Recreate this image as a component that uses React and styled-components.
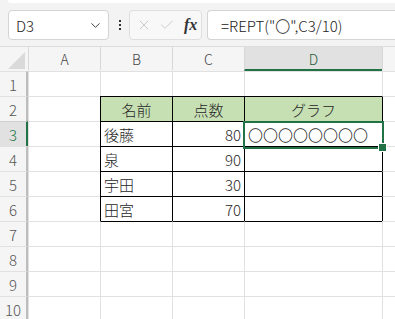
import React from 'react'
import styled, { createGlobalStyle } from 'styled-components'
import { ChevronDown, X, Check } from 'lucide-react'

const GlobalStyle = createGlobalStyle`
  html, body {
    margin: 0;
    padding: 0;
    overflow: hidden;
    background: #f3f3f3;
  }
  * {
    box-sizing: border-box;
  }
`

const FONT = `"Noto Sans CJK JP", "Noto Sans", sans-serif`
const GRID = '#e1e1e1'
const GREEN = '#217346'

const Window = styled.div`
  width: 395px;
  height: 319px;
  overflow: hidden;
  background: #f3f3f3;
  font-family: ${FONT};
  font-weight: 300;
`

const Toolbar = styled.div`
  height: 47px;
  background: #f3f3f3;
  border-bottom: 1px solid #dcdcdc;
`

const RibbonLip = styled.div`
  height: 3px;
  margin-left: 8px;
  background: #fff;
  border-bottom-left-radius: 6px;
`

const FormulaRow = styled.div`
  display: flex;
  align-items: center;
  height: 30px;
  margin-top: 7px;
  padding-left: 8px;
`

const NameBox = styled.div`
  display: flex;
  align-items: center;
  justify-content: space-between;
  width: 101px;
  height: 30px;
  padding: 0 5px 0 7px;
  background: #fff;
  border: 1px solid #d4d4d4;
  border-radius: 4px;
  font-size: 15px;
  color: #222;
`

const Dots = styled.div`
  display: flex;
  flex-direction: column;
  gap: 2px;
  margin: 0 8px 0 10px;

  span {
    width: 2px;
    height: 2px;
    background: #333;
  }
`

const ButtonBox = styled.div`
  display: flex;
  align-items: center;
  gap: 7px;
  width: 73px;
  height: 30px;
  padding-left: 6px;
  background: #f8f8f8;
  border: 1px solid #dedede;
  border-radius: 4px;
  color: #c4c4c4;
`

const Fx = styled.span`
  font-family: "Liberation Serif", serif;
  font-style: italic;
  font-weight: bold;
  font-size: 16px;
  color: #333;
  margin-left: 2px;
`

const FormulaInput = styled.div`
  display: flex;
  align-items: center;
  flex: 1;
  height: 30px;
  margin-left: 5px;
  padding-left: 13px;
  background: #fff;
  border: 1px solid #d4d4d4;
  border-right: none;
  border-radius: 4px 0 0 4px;
  font-size: 15px;
  color: #222;
  white-space: nowrap;
`

const Sheet = styled.div`
  position: relative;
  display: grid;
  grid-template-columns: 28px 72px 72px 72px 138px 1fr;
  grid-template-rows: 24px;
  grid-auto-rows: 25px;
  background: #fff;
`

const Corner = styled.div`
  position: relative;
  background: #f5f5f5;

  &::after {
    content: '';
    position: absolute;
    right: 3px;
    bottom: 2px;
    border-style: solid;
    border-width: 0 0 17px 17px;
    border-color: transparent transparent #dadada transparent;
  }
`

const ColHead = styled.div`
  display: flex;
  align-items: center;
  justify-content: center;
  background: ${p => (p.$active ? '#e1e1e1' : '#f5f5f5')};
  border-left: 1px solid #d8d8d8;
  border-bottom: 2px solid ${p => (p.$active ? GREEN : '#f5f5f5')};
  font-size: 14px;
  color: ${p => (p.$active ? '#1c5c38' : '#444')};
  padding-top: 2px;
`

const RowHead = styled.div`
  display: flex;
  align-items: center;
  justify-content: center;
  background: ${p => (p.$active ? '#e1e1e1' : '#f5f5f5')};
  border-top: 1px solid ${p => (p.$active ? '#d0d0d0' : GRID)};
  border-right: 2px solid ${p => (p.$active ? GREEN : '#bdbdbd')};
  font-size: 15px;
  color: ${p => (p.$active ? GREEN : '#555')};
`

const Cell = styled.div`
  display: flex;
  align-items: center;
  justify-content: ${p => p.$align};
  padding: 0 3px 0 3px;
  background: ${p => p.$fill};
  border-left: 1px solid ${p => p.$left};
  border-top: 1px solid ${p => p.$top};
  font-size: 15px;
  color: #262626;
  white-space: nowrap;
  overflow: hidden;
`

const Selection = styled.div`
  position: absolute;
  left: 243px;
  top: 74px;
  width: 141px;
  height: 28px;
  border: 2px solid ${GREEN};
  pointer-events: none;

  &::after {
    content: '';
    position: absolute;
    right: -5px;
    bottom: -5px;
    width: 7px;
    height: 7px;
    background: ${GREEN};
    border: 1px solid #fff;
  }
`

const cols = ['A', 'B', 'C', 'D', '']

const data = [
  ['名前', '点数', 'グラフ'],
  ['後藤', '80', '〇〇〇〇〇〇〇〇'],
  ['泉', '90', ''],
  ['宇田', '30', ''],
  ['田宮', '70', ''],
]

const inTable = (r, c) => r >= 2 && r <= 6 && c >= 1 && c <= 3

const cellProps = (r, c) => {
  const tableCell = inTable(r, c)
  const left = tableCell || inTable(r, c - 1) ? '#000' : GRID
  const top = tableCell || inTable(r - 1, c) ? '#000' : GRID
  let text = ''
  let align = 'flex-start'
  let fill = '#fff'
  if (tableCell) {
    text = data[r - 2][c - 1]
    if (r === 2) {
      align = 'center'
      fill = '#c6e0b4'
    } else if (c === 2) {
      align = 'flex-end'
    }
  }
  return { left, top, text, align, fill }
}

const App = () => {
  const rows = Array.from({ length: 10 }, (_, i) => i + 1)

  return (
    <Window>
      <GlobalStyle />
      <Toolbar>
        <RibbonLip />
        <FormulaRow>
          <NameBox>
            D3
            <ChevronDown size={15} strokeWidth={1.6} color="#444" />
          </NameBox>
          <Dots>
            <span />
            <span />
            <span />
          </Dots>
          <ButtonBox>
            <X size={16} strokeWidth={1.3} />
            <Check size={16} strokeWidth={1.3} />
            <Fx>fx</Fx>
          </ButtonBox>
          <FormulaInput>=REPT("〇",C3/10)</FormulaInput>
        </FormulaRow>
      </Toolbar>
      <Sheet>
        <Corner />
        {cols.map((c, i) => (
          <ColHead key={i} $active={c === 'D'}>
            {c}
          </ColHead>
        ))}
        {rows.map(r => (
          <React.Fragment key={r}>
            <RowHead $active={r === 3}>{r}</RowHead>
            {cols.map((_, c) => {
              const p = cellProps(r, c)
              return (
                <Cell key={c} $left={p.left} $top={p.top} $align={p.align} $fill={p.fill}>
                  {p.text}
                </Cell>
              )
            })}
          </React.Fragment>
        ))}
        <Selection />
      </Sheet>
    </Window>
  )
}

export default App
